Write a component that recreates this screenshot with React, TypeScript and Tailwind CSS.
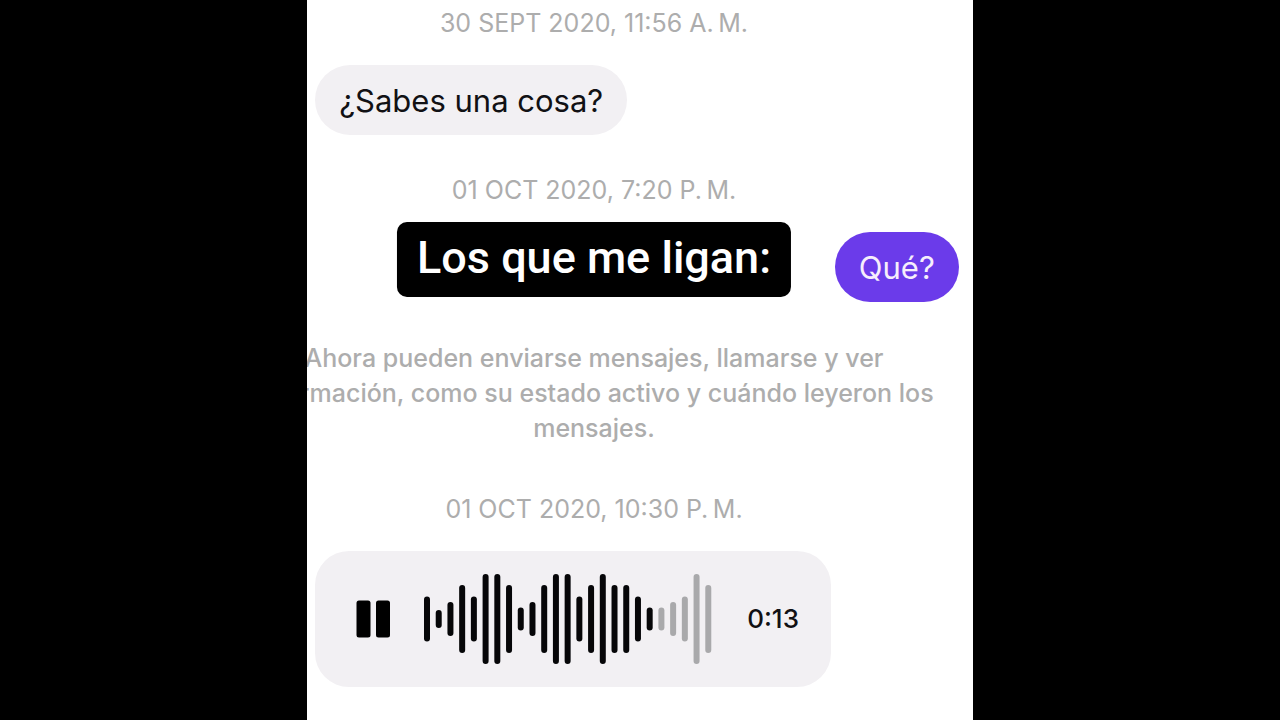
import { useState, type ReactNode } from 'react'

// height of each bar in the voice note
const BARS = [
  45, 18, 34, 68, 45, 90, 90, 68, 23, 34, 68, 90, 90,
  45, 68, 90, 68, 68, 45, 23, 23, 34, 45, 90, 68,
]
const PLAYED = 20

function Timestamp({ children }: { children: ReactNode }) {
  return (
    <time className="block pt-[26px] pb-6 text-center text-[25px] leading-9 text-[#adadad]">
      {children}
    </time>
  )
}

function Bubble({ own = false, children }: { own?: boolean; children: ReactNode }) {
  return (
    <p
      className={
        own
          ? 'self-end rounded-full bg-[#6b3bea] px-6 pt-4 pb-3.5 text-[31px] leading-10 text-[#f6eefc]'
          : 'ml-[86px] self-start rounded-full bg-[#f2f0f3] px-6 pt-4 pb-3.5 text-[31px] leading-10 text-[#111114]'
      }
    >
      {children}
    </p>
  )
}

function Waveform() {
  return (
    <svg width="288" height="90" viewBox="0 0 288 90" role="img" aria-label="Nota de voz">
      {BARS.map((height, i) => (
        <rect
          key={i}
          x={i * 11.72}
          y={(90 - height) / 2}
          width="6"
          height={height}
          rx="3"
          fill={i < PLAYED ? '#060608' : '#a9a9ab'}
        />
      ))}
    </svg>
  )
}

function VoiceMessage() {
  const [playing, setPlaying] = useState(true)

  return (
    <div className="ml-[86px] flex items-center self-start rounded-[34px] bg-[#f2f0f3] py-[23px] pr-8 pl-[41px]">
      <button
        type="button"
        aria-label={playing ? 'Pausar' : 'Reproducir'}
        onClick={() => setPlaying(!playing)}
      >
        <svg width="35" height="38" viewBox="0 0 35 38" fill="#000">
          {playing ? (
            <>
              <rect x="0.5" y="0.5" width="14" height="37" rx="2.5" />
              <rect x="20" y="0.5" width="14" height="37" rx="2.5" />
            </>
          ) : (
            <path d="M3 1l30 18L3 37z" />
          )}
        </svg>
      </button>
      <div className="mr-[35px] ml-[33px]">
        <Waveform />
      </div>
      <span className="text-[26px] leading-[90px] font-medium text-[#111114]">0:13</span>
    </div>
  )
}

export default function App() {
  return (
    <div className="flex min-h-screen justify-center bg-black font-['Inter','Liberation_Sans',sans-serif]">
      <div className="w-[52%] overflow-hidden bg-white">
        {/* The chat runs past the left edge of the frame */}
        <main className="relative mr-3.5 ml-[-78px] flex flex-col">
          <div className="-mt-[21px]">
            <Timestamp>30 SEPT 2020, 11:56 A.{'\u2009'}M.</Timestamp>
          </div>
          <Bubble>¿Sabes una cosa?</Bubble>

          <div className="mt-[11px]">
            <Timestamp>01 OCT 2020, 7:20 P.{'\u2009'}M.</Timestamp>
          </div>
          <Bubble own>Qué?</Bubble>

          <p className="mt-[39px] text-center text-[25px] leading-[35px] font-medium whitespace-nowrap text-[#adadad]">
            Ahora pueden enviarse mensajes, llamarse y ver
            <br />
            información, como su estado activo y cuándo leyeron los
            <br />
            mensajes.
          </p>

          <div className="mt-[19px]">
            <Timestamp>01 OCT 2020, 10:30 P.{'\u2009'}M.</Timestamp>
          </div>
          <VoiceMessage />

          {/* Caption over the chat */}
          <h1 className="absolute top-[222px] left-1/2 -translate-x-1/2 rounded-[10px] bg-black px-5 pt-1.5 pb-[9px] font-['Roboto','Liberation_Sans',sans-serif] text-[45px] leading-[60px] font-medium whitespace-nowrap text-white">
            Los que me ligan:
          </h1>
        </main>
      </div>
    </div>
  )
}
